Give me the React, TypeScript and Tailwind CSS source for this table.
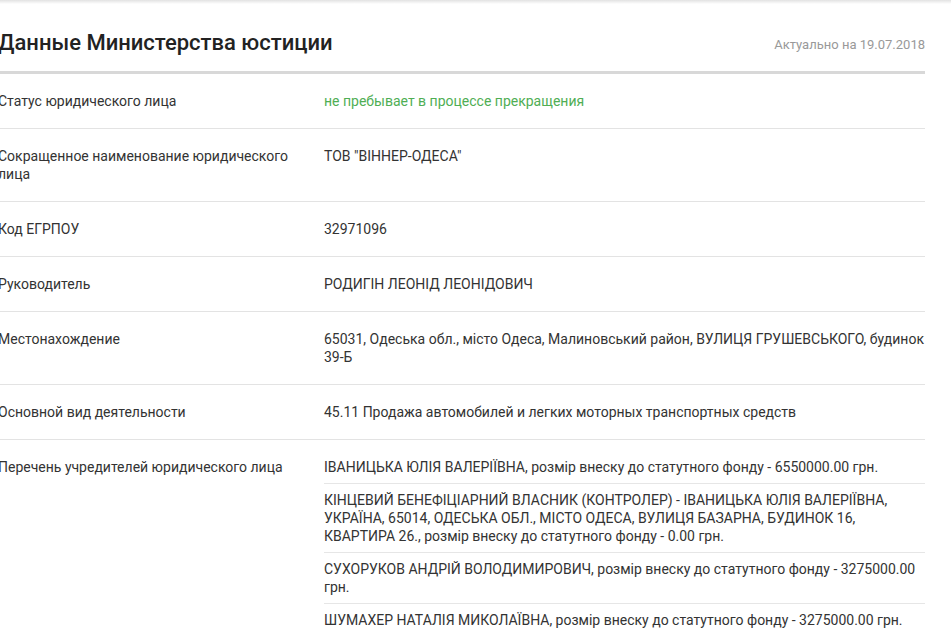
const rows: { label: string; value: string; green?: boolean }[] = [
  { label: 'Статус юридического лица', value: 'не пребывает в процессе прекращения', green: true },
  { label: 'Сокращенное наименование юридического лица', value: 'ТОВ "ВІННЕР-ОДЕСА"' },
  { label: 'Код ЕГРПОУ', value: '32971096' },
  { label: 'Руководитель', value: 'РОДИГІН ЛЕОНІД ЛЕОНІДОВИЧ' },
  {
    label: 'Местонахождение',
    value: '65031, Одеська обл., місто Одеса, Малиновський район, ВУЛИЦЯ ГРУШЕВСЬКОГО, будинок 39-Б',
  },
  { label: 'Основной вид деятельности', value: '45.11 Продажа автомобилей и легких моторных транспортных средств' },
]

const founders = [
  'ІВАНИЦЬКА ЮЛІЯ ВАЛЕРІЇВНА, розмір внеску до статутного фонду - 6550000.00 грн.',
  'КІНЦЕВИЙ БЕНЕФІЦІАРНИЙ ВЛАСНИК (КОНТРОЛЕР) - ІВАНИЦЬКА ЮЛІЯ ВАЛЕРІЇВНА, УКРАЇНА, 65014, ОДЕСЬКА ОБЛ., МІСТО ОДЕСА, ВУЛИЦЯ БАЗАРНА, БУДИНОК 16, КВАРТИРА 26., розмір внеску до статутного фонду - 0.00 грн.',
  'СУХОРУКОВ АНДРІЙ ВОЛОДИМИРОВИЧ, розмір внеску до статутного фонду - 3275000.00 грн.',
  'ШУМАХЕР НАТАЛІЯ МИКОЛАЇВНА, розмір внеску до статутного фонду - 3275000.00 грн.',
]

export default function App() {
  return (
    <div className="min-h-screen bg-white font-['Roboto',sans-serif] text-[#333] overflow-hidden">
      {/* top shadow strip */}
      <div className="h-[4px] bg-gradient-to-b from-[#e2e2e2] to-white"></div>

      <div className="-ml-[2px] w-[927px]">
        {/* Header */}
        <div className="flex items-end justify-between pt-[25px] pb-[14px] border-b-[3px] border-[#d8d8d8]">
          <h2 className="text-[22px] leading-[28px] font-medium text-[#222]">Данные Министерства юстиции</h2>
          <span className="text-[13px] leading-[20px] text-[#999] mb-[2px]">Актуально на 19.07.2018</span>
        </div>

        {/* Rows */}
        {rows.map((r) => (
          <div key={r.label} className="flex border-b border-[#e3e3e3] text-[14px] leading-[18px]">
            <div className="w-[326px] shrink-0 pr-[30px] py-[18px]">{r.label}</div>
            <div className={`flex-1 py-[18px] ${r.green ? 'text-[#4fae54]' : ''}`}>{r.value}</div>
          </div>
        ))}

        {/* Founders */}
        <div className="flex text-[14px] leading-[18px]">
          <div className="w-[326px] shrink-0 pr-[30px] py-[18px]">Перечень учредителей юридического лица</div>
          <div className="flex-1 pt-[11px]">
            {founders.map((f, i) => (
              <div
                key={i}
                className={`py-[7px] ${i < founders.length - 1 ? 'border-b border-[#e6e6e6]' : ''}`}
              >
                {f}
              </div>
            ))}
          </div>
        </div>
      </div>
    </div>
  )
}
